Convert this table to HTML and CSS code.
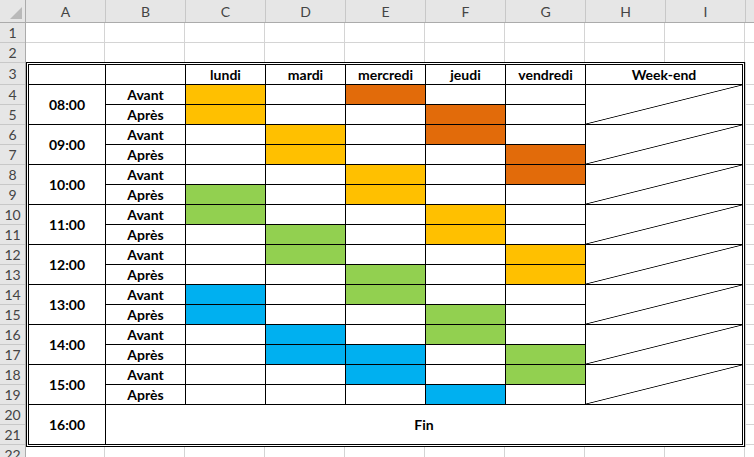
FILE: index.html
```html
<!DOCTYPE html>
<html lang="fr">
<head>
<meta charset="utf-8">
<title>Planning</title>
<link rel="stylesheet" href="styles.css">
</head>
<body>
<div class="sheet">
  <div class="colhead">
    <div class="corner"><svg class="tri" width="12" height="12" viewBox="0 0 12 12"><polygon points="12,0 12,12 0,12" fill="#b9b9b9"/></svg></div>
    <div class="ch">A</div><div class="ch">B</div><div class="ch">C</div><div class="ch">D</div><div class="ch">E</div><div class="ch">F</div><div class="ch">G</div><div class="ch">H</div><div class="ch">I</div><div class="ch rest"></div>
  </div>
  <div class="main">
    <div class="rowhead">
      <div class="rh">1</div><div class="rh">2</div><div class="rh tall">3</div>
      <div class="rh">4</div><div class="rh">5</div><div class="rh">6</div><div class="rh">7</div>
      <div class="rh">8</div><div class="rh">9</div><div class="rh">10</div><div class="rh">11</div>
      <div class="rh">12</div><div class="rh">13</div><div class="rh">14</div><div class="rh">15</div>
      <div class="rh">16</div><div class="rh">17</div><div class="rh">18</div><div class="rh">19</div>
      <div class="rh">20</div><div class="rh">21</div><div class="rh">22</div>
    </div>
    <div class="area">
      <div class="grow"><div class="gc"></div><div class="gc"></div><div class="gc"></div><div class="gc"></div><div class="gc"></div><div class="gc"></div><div class="gc"></div><div class="gc"></div><div class="gc"></div><div class="gc rest"></div></div>
      <div class="grow r2"><div class="gc"></div><div class="gc"></div><div class="gc"></div><div class="gc"></div><div class="gc"></div><div class="gc"></div><div class="gc"></div><div class="gc"></div><div class="gc"></div><div class="gc rest"></div></div>
      <div class="tablewrap">
        <div class="tbl">
          <div class="c"></div><div class="c"></div><div class="c">lundi</div><div class="c">mardi</div><div class="c">mercredi</div><div class="c">jeudi</div><div class="c">vendredi</div><div class="c">Week-end</div>

          <div class="c t">08:00</div><div class="c">Avant</div><div class="c y"></div><div class="c"></div><div class="c o"></div><div class="c"></div><div class="c"></div><div class="c we"></div>
          <div class="c">Après</div><div class="c y"></div><div class="c"></div><div class="c"></div><div class="c o"></div><div class="c"></div>

          <div class="c t">09:00</div><div class="c">Avant</div><div class="c"></div><div class="c y"></div><div class="c"></div><div class="c o"></div><div class="c"></div><div class="c we"></div>
          <div class="c">Après</div><div class="c"></div><div class="c y"></div><div class="c"></div><div class="c"></div><div class="c o"></div>

          <div class="c t">10:00</div><div class="c">Avant</div><div class="c"></div><div class="c"></div><div class="c y"></div><div class="c"></div><div class="c o"></div><div class="c we"></div>
          <div class="c">Après</div><div class="c g"></div><div class="c"></div><div class="c y"></div><div class="c"></div><div class="c"></div>

          <div class="c t">11:00</div><div class="c">Avant</div><div class="c g"></div><div class="c"></div><div class="c"></div><div class="c y"></div><div class="c"></div><div class="c we"></div>
          <div class="c">Après</div><div class="c"></div><div class="c g"></div><div class="c"></div><div class="c y"></div><div class="c"></div>

          <div class="c t">12:00</div><div class="c">Avant</div><div class="c"></div><div class="c g"></div><div class="c"></div><div class="c"></div><div class="c y"></div><div class="c we"></div>
          <div class="c">Après</div><div class="c"></div><div class="c"></div><div class="c g"></div><div class="c"></div><div class="c y"></div>

          <div class="c t">13:00</div><div class="c">Avant</div><div class="c b"></div><div class="c"></div><div class="c g"></div><div class="c"></div><div class="c"></div><div class="c we"></div>
          <div class="c">Après</div><div class="c b"></div><div class="c"></div><div class="c"></div><div class="c g"></div><div class="c"></div>

          <div class="c t">14:00</div><div class="c">Avant</div><div class="c"></div><div class="c b"></div><div class="c"></div><div class="c g"></div><div class="c"></div><div class="c we"></div>
          <div class="c">Après</div><div class="c"></div><div class="c b"></div><div class="c b"></div><div class="c"></div><div class="c g"></div>

          <div class="c t">15:00</div><div class="c">Avant</div><div class="c"></div><div class="c"></div><div class="c b"></div><div class="c"></div><div class="c g"></div><div class="c we"></div>
          <div class="c">Après</div><div class="c"></div><div class="c"></div><div class="c"></div><div class="c b"></div><div class="c"></div>

          <div class="c t">16:00</div><div class="c fin">Fin</div>
        </div>
        <div class="tail"></div>
      </div>
      <div class="grow"><div class="gc"></div><div class="gc"></div><div class="gc"></div><div class="gc"></div><div class="gc"></div><div class="gc"></div><div class="gc"></div><div class="gc"></div><div class="gc"></div><div class="gc rest"></div></div>
    </div>
  </div>
</div>
</body>
</html>
```
FILE: styles.css
```css
* { box-sizing: border-box; margin: 0; padding: 0; }
html, body { width: 754px; height: 457px; overflow: hidden; background: #fff; }
body { font-family: Lato, "Liberation Sans", sans-serif; color: #000; }

.sheet { display: flex; flex-direction: column; width: 754px; }

.colhead {
  display: flex;
  height: 23px;
  background: #e6e6e6;
  border-bottom: 1px solid #ababab;
}
.corner {
  flex: none;
  width: 26px;
  border-right: 1px solid #ababab;
  display: flex;
  align-items: flex-end;
  justify-content: flex-end;
  padding: 0 3px 3px 0;
}
.ch {
  flex: none;
  width: 80px;
  border-right: 1px solid #c8c8c8;
  font-size: 14px;
  color: #444;
  display: flex;
  align-items: center;
  justify-content: center;
}
.ch.rest { flex: 1; width: auto; border-right: none; }

.main { display: flex; }

.rowhead {
  flex: none;
  width: 26px;
  background: #e6e6e6;
  border-right: 1px solid #ababab;
  display: flex;
  flex-direction: column;
}
.rh {
  height: 20px;
  border-bottom: 1px solid #c8c8c8;
  font-size: 14px;
  color: #444;
  display: flex;
  align-items: center;
  justify-content: center;
  flex: none;
}
.rh.tall { height: 22px; }

.area { flex: 1; display: flex; flex-direction: column; }

.grow { display: flex; height: 20px; }
.grow.r2 { height: 19px; }
.grow.r2 .gc { border-bottom: none; }
.gc {
  flex: none;
  width: 80px;
  border-right: 1px solid #d4d4d4;
  border-bottom: 1px solid #d4d4d4;
}
.gc:first-child { width: 79px; }
.gc.rest { flex: 1; width: auto; border-right: none; }

.tablewrap { display: flex; }

.tbl {
  flex: none;
  display: grid;
  grid-template-columns: 76px repeat(6, 79px) 156px;
  grid-template-rows: repeat(19, 19px);
  gap: 1px;
  background: #000;
  background-clip: padding-box;
  border: 3px double #000;
}
.tail {
  flex: 1;
  border-left: 1px solid #d4d4d4;
  background: repeating-linear-gradient(to bottom, transparent 0 19px, #d4d4d4 19px 20px);
  background-position: 0 3px;
}

.c {
  background: #fff;
  font-size: 14px;
  font-weight: 700;
  display: flex;
  align-items: center;
  justify-content: center;
  line-height: 19px;
}
.c.t { grid-row: span 2; }
.c.we {
  grid-row: span 2;
  background: linear-gradient(to top left, #fff calc(50% - 0.8px), #000 50%, #fff calc(50% + 0.8px));
}
.c.fin { grid-row: span 2; grid-column: span 7; }
.y { background: #ffc000; }
.o { background: #e26b0a; }
.g { background: #92d050; }
.b { background: #00b0f0; }
```
